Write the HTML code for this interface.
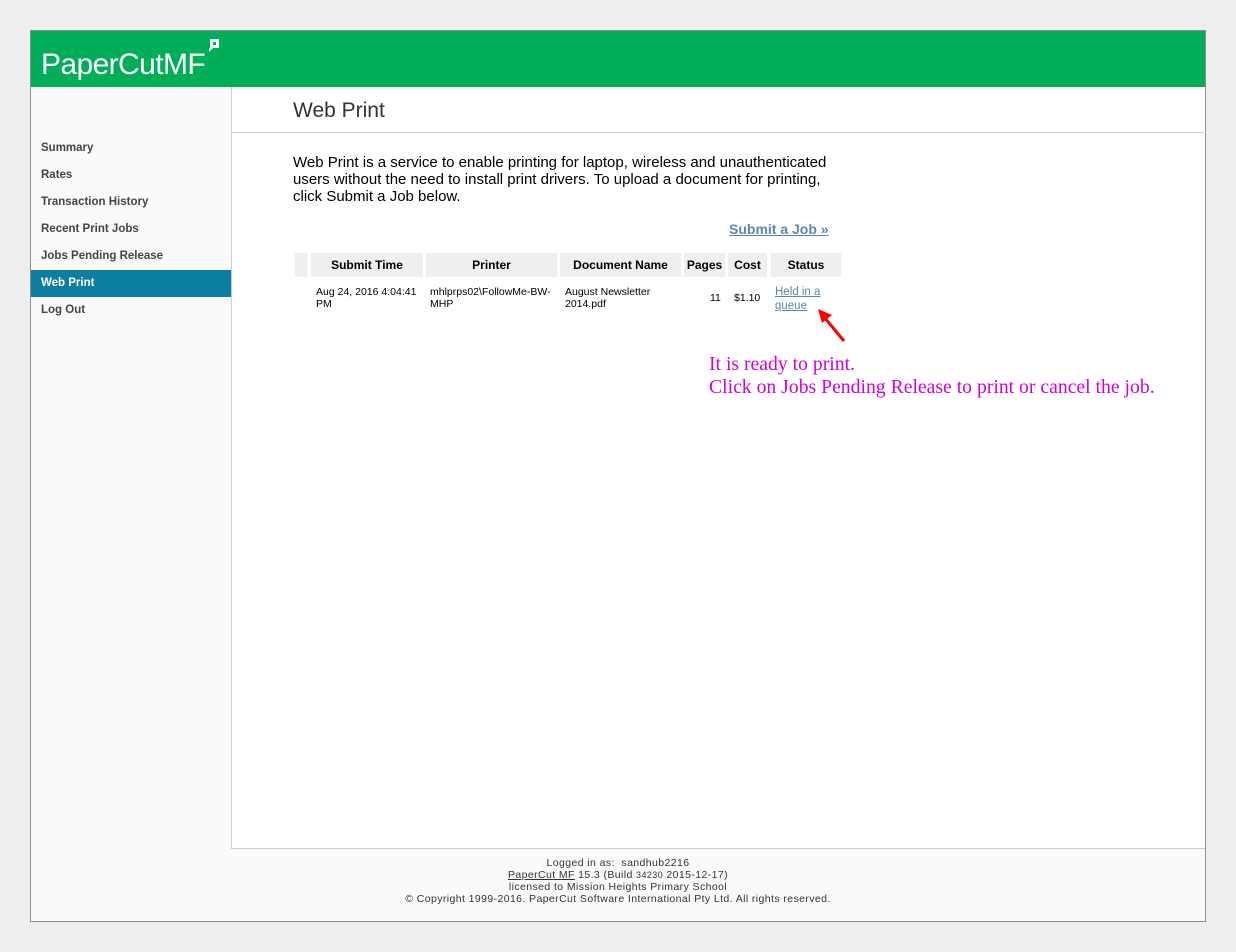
<!DOCTYPE html>
<html><head><meta charset="utf-8"><style>
*{margin:0;padding:0;box-sizing:border-box}
body{width:1236px;height:952px;background:#eeeeee;font-family:"Liberation Sans",Arial,sans-serif;position:relative;overflow:hidden}
#frame{position:absolute;left:30px;top:30px;width:1176px;height:892px;border:1px solid #8c8c8c;background:#fafafa}
#hdr{position:absolute;left:0;top:0;width:1174px;height:56px;background:#00ae57}
#logo{position:absolute;left:10px;top:17px;color:#fff;font-size:30px;letter-spacing:-0.6px}
#side{position:absolute;left:0;top:56px;width:200px}
#side div{height:27px;line-height:27px;padding-left:10px;font-size:11.5px;font-weight:bold;color:#444}
#side .act{background:#0c7ea0;color:#fff}
#main{position:absolute;left:200px;top:56px;width:974px;height:762px;background:#fff;border-left:1px solid #ccc;border-bottom:1px solid #ccc}
h1{position:absolute;left:61px;top:12px;font-weight:normal;font-size:21px;color:#333}
#rule{position:absolute;left:0;top:45px;width:974px;border-top:1px solid #ccc}
#intro{position:absolute;left:61px;top:67px;width:552px;font-size:15px;line-height:17px;color:#000}
#sub{position:absolute;left:497px;top:134px;font-size:14px;font-weight:bold;color:#5a86b0;text-decoration:underline}
.th{position:absolute;top:166px;height:24px;background:#efefef;font-size:12px;font-weight:bold;text-align:center;line-height:24px}
.td{position:absolute;top:199px;font-size:10.5px;line-height:12px}
#note{position:absolute;left:477px;top:266px;font-family:"Liberation Serif",serif;font-size:19.7px;line-height:23px;color:#d000d8}
#foot{position:absolute;left:0;top:826px;width:1174px;text-align:center;font-size:10.5px;line-height:12px;color:#333;letter-spacing:0.4px}
</style></head><body>
<div id="frame">
<div id="hdr"><div id="logo">PaperCutMF</div>
<svg style="position:absolute;left:176px;top:7px" width="14" height="16" viewBox="0 0 14 16"><path d="M3 1h9v9H6l-4 4V10H3z" fill="#fff"/><rect x="6" y="4" width="3" height="3" fill="#00ae57"/></svg></div>
<div id="side" style="padding-top:48px">
<div>Summary</div><div>Rates</div><div>Transaction History</div><div>Recent Print Jobs</div><div>Jobs Pending Release</div><div class="act">Web Print</div><div>Log Out</div></div>
<div id="main">
<h1>Web Print</h1><div id="rule"></div>
<div id="intro">Web Print is a service to enable printing for laptop, wireless and unauthenticated users without the need to install print drivers. To upload a document for printing, click Submit a Job below.</div>
<div id="sub">Submit a Job »</div>
<div class="th" style="left:63px;width:12px"></div>
<div class="th" style="left:79px;width:112px">Submit Time</div>
<div class="th" style="left:194px;width:131px">Printer</div>
<div class="th" style="left:328px;width:121px">Document Name</div>
<div class="th" style="left:452px;width:41px">Pages</div>
<div class="th" style="left:496px;width:39px">Cost</div>
<div class="th" style="left:539px;width:70px">Status</div>
<div class="td" style="left:84px">Aug 24, 2016 4:04:41<br>PM</div>
<div class="td" style="left:198px">mhlprps02\FollowMe-BW-<br>MHP</div>
<div class="td" style="left:333px">August Newsletter<br>2014.pdf</div>
<div class="td" style="left:478px;top:205px">11</div>
<div class="td" style="left:502px;top:205px">$1.10</div>
<div class="td" style="left:543px;top:198px;font-size:11.5px;line-height:14px;color:#5a86b0;text-decoration:underline">Held in a<br>queue</div>
<svg style="position:absolute;left:582px;top:220px" width="34" height="38" viewBox="0 0 34 38"><path d="M30 34L10 10" stroke="#f00" stroke-width="3"/><path d="M4 2l14 6-10 8z" fill="#f00"/></svg>
<div id="note">It is ready to print.<br>Click on Jobs Pending Release to print or cancel the job.</div>
</div>
<div id="foot">Logged in as:&nbsp; sandhub2216<br><u>PaperCut MF</u> 15.3 (Build <span style="font-size:9px">34230</span> 2015-12-17)<br>licensed to Mission Heights Primary School<br>© Copyright 1999-2016. PaperCut Software International Pty Ltd. All rights reserved.</div>
</div>
</body></html>
